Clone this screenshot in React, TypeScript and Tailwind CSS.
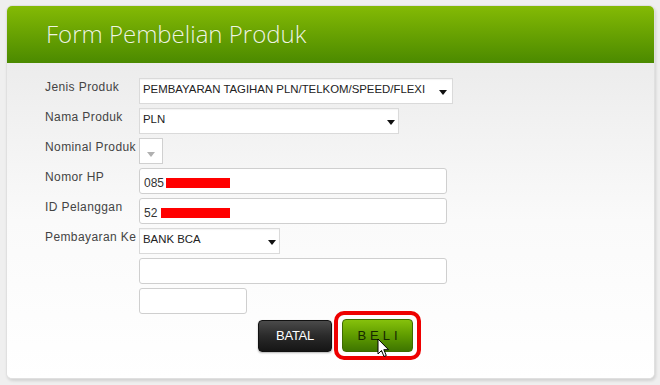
import React from "react";

const Arrow = ({ gray }: { gray?: boolean }) => (
  <svg width="8" height="5" viewBox="0 0 8 5" className="shrink-0">
    <path d="M0 0 L8 0 L4 5 Z" fill={gray ? "#b0b0b0" : "#111"} />
  </svg>
);

const Label = ({ children }: { children: React.ReactNode }) => (
  <div className="w-[94px] shrink-0 pt-[1px] text-[12px] leading-[16px] tracking-[0.4px] text-[#444] whitespace-nowrap">{children}</div>
);

const Select = ({ w, text, arrowPad }: { w: string; text: string; arrowPad: string }) => (
  <div className={`${w} h-[26px] bg-white border border-[#dadada] shadow-[inset_0_1px_1px_rgba(0,0,0,0.05)] flex items-start justify-between pl-[3px] ${arrowPad}`}>
    <span className="text-[11.4px] leading-[16px] pt-[2px] text-[#222] whitespace-nowrap">{text}</span>
    <div className="pt-[11px]"><Arrow /></div>
  </div>
);

const Input = ({ w, children }: { w: string; children?: React.ReactNode }) => (
  <div className={`${w} h-[26px] bg-white border border-[#cfcfcf] rounded-[3px] flex items-center pl-[4px] text-[12px] text-[#333] pt-[3px]`}>
    {children}
  </div>
);

export default function App() {
  return (
    <div className="w-[660px] h-[385px] bg-[#efefef] pt-[5px] pl-[6px]" style={{ fontFamily: '"Liberation Sans", Arial, sans-serif' }}>
      <div className="w-[649px] h-[374px] rounded-[6px] border border-[#e0e0e0] shadow-[1px_2px_3px_rgba(0,0,0,0.12)] overflow-hidden flex flex-col bg-white">
        <div className="h-[57px] shrink-0 bg-gradient-to-b from-[#84ba05] to-[#4b8a00] flex items-center pl-[39px]">
          <span className="text-[24px] font-light text-[#eef6e0] pb-[2px]" style={{ fontFamily: '"Open Sans", sans-serif', textShadow: "0 0 1px rgba(0,0,0,0.15)" }}>
            Form Pembelian Produk
          </span>
        </div>
        <div className="flex-1 bg-gradient-to-b from-[#ececec] via-[#fafafa] to-white pl-[38px] pt-[15px] flex flex-col">
          <div className="flex flex-col gap-[4px]">
            <div className="flex">
              <Label>Jenis Produk</Label>
              <Select w="w-[314px]" text="PEMBAYARAN TAGIHAN PLN/TELKOM/SPEED/FLEXI" arrowPad="pr-[5px]" />
            </div>
            <div className="flex">
              <Label>Nama Produk</Label>
              <Select w="w-[260px]" text="PLN" arrowPad="pr-[3px]" />
            </div>
            <div className="flex">
              <Label>Nominal Produk</Label>
              <div className="w-[24px] h-[26px] bg-white border border-[#d0d0d0] flex justify-center pt-[13px]">
                <Arrow gray />
              </div>
            </div>
            <div className="flex">
              <Label>Nomor HP</Label>
              <Input w="w-[308px]">
                <span>085</span>
                <span className="ml-[2px] w-[64px] h-[10px] bg-[#ff0000]" />
              </Input>
            </div>
            <div className="flex">
              <Label>ID Pelanggan</Label>
              <Input w="w-[308px]">
                <span>52</span>
                <span className="ml-[4px] w-[69px] h-[10px] bg-[#ff0000]" />
              </Input>
            </div>
            <div className="flex">
              <Label>Pembayaran Ke</Label>
              <Select w="w-[141px]" text="BANK BCA" arrowPad="pr-[3px]" />
            </div>
            <div className="flex">
              <div className="w-[94px] shrink-0" />
              <Input w="w-[308px]" />
            </div>
            <div className="flex">
              <div className="w-[94px] shrink-0" />
              <Input w="w-[108px]" />
            </div>
          </div>
          <div className="flex items-center -mt-[3px] pl-[213px]">
            <div className="w-[74px] h-[32px] rounded-[4px] bg-gradient-to-b from-[#4a4a4a] via-[#2a2a2a] to-[#151515] border border-[#111] shadow-[0_1px_2px_rgba(0,0,0,0.3)] flex items-center justify-center text-white text-[13px] tracking-[-0.3px]">
              BATAL
            </div>
            <div className="ml-[2px] border-[4px] border-[#ee0000] rounded-[10px] p-[4px] relative">
              <div className="w-[71px] h-[33px] rounded-[4px] bg-gradient-to-b from-[#86c10c] via-[#5f9c00] to-[#3e7500] border border-[#3d6b00] flex items-center justify-center text-[#162800] text-[13px] tracking-[4px] pl-[4px]">
                BELI
              </div>
              <svg className="absolute left-[39px] top-[23px]" width="13" height="20" viewBox="0 0 13 20">
                <path d="M1 1 L1 16 L4.5 12.5 L7 18.5 L9.3 17.5 L6.8 11.7 L11.5 11.7 Z" fill="white" stroke="black" strokeWidth="1" strokeLinejoin="round" />
              </svg>
            </div>
          </div>
        </div>
      </div>
    </div>
  );
}
